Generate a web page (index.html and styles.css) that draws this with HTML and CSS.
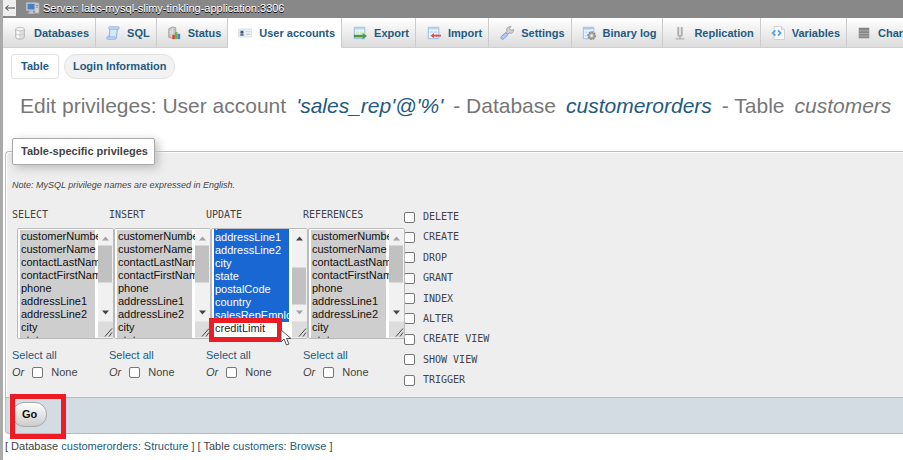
FILE: index.html
```html
<!DOCTYPE html>
<html lang="en">
<head>
<meta charset="utf-8">
<title>Edit privileges</title>
<link rel="stylesheet" href="styles.css">
</head>
<body>
<header class="server">
  <button class="collapse" type="button" aria-label="Collapse navigation"><svg width="12" height="8" viewBox="0 0 12 8"><path d="M11 4H2M4.500 1.500 1.500 4l3 2.500" fill="none" stroke="#444"/></svg></button>
  <svg class="icon" viewBox="0 0 16 16"><path d="M10 2h5v12h-5z" fill="#d5d5d5" stroke="#999"/><path d="M11.500 5h2M11.500 7h2" stroke="#777"/><path d="M1 2.500h9.500v8H1z" fill="#4a7fc4" stroke="#c5ccd6" stroke-width="1.500"/><path d="M4 11h4v2H4zM2.500 13h7v1.500h-7z" fill="#c4c4c4"/></svg>
  <a href="#">Server: labs-mysql-slimy-tinkling-application:3306</a>
</header>

<nav class="tabs">
  <a class="tab" href="#"><svg class="icon" viewBox="0 0 16 16"><path d="M3 3.500v9c0 3.500 10 3.500 10 0v-9" fill="#dedede" stroke="#b4b4b4"/><path d="M4 5h3v9L4 13z" fill="#f8f8f8"/><ellipse cx="8" cy="3.500" rx="5" ry="2" fill="#f4f4f4" stroke="#bbb"/><path d="M3 8c0 3 10 3 10 0" fill="none" stroke="#c6c6c6"/></svg>Databases</a>
  <a class="tab" href="#"><svg class="icon" viewBox="0 0 16 16"><path d="M4 1h10c1.500 0 1.500 2.500 0 2.500h-1L12 13c0 1.500-1 2-2 2H2c-1.500 0-1.500-2.500 0-2.500h1.500L4.500 4C3 4 2.500 1.500 4 1z" fill="#d7e8fb" stroke="#7ba5d7"/><path d="M4.500 3.500H13M3 12.500h7c.8 0 .8 2 0 2.500" fill="none" stroke="#7ba5d7"/></svg>SQL</a>
  <a class="tab" href="#"><svg class="icon" viewBox="0 0 16 16"><path d="M2 3l4-2 4 1v10l-4 2-4-1z" fill="#c7c7c7" stroke="#9b9b9b"/><path d="M6 3v10M3 6h2M3 8h2" stroke="#eee"/><path d="M6 10h3v5H6z" fill="#e93f31"/><path d="M9 7h3v8H9z" fill="#65b547"/><path d="M12 9h3v6h-3z" fill="#4b7de0"/></svg>Status</a>
  <a class="tab active" href="#" aria-current="page"><svg class="icon" viewBox="0 0 16 16"><path d="M.5 3.500h15v9H.5z" fill="#eef3f8" stroke="#d5dbe1"/><path d="M2 5h5v6H2z" fill="#9ccaf2"/><circle cx="4.500" cy="7" r="1.500" fill="#70492e"/><path d="M2.500 11c0-3 4-3 4 0z" fill="#3c76c5"/><path d="M9 6.500h2M12 6.500h2M9 9.500h5" stroke="#b5bfca"/></svg>User accounts</a>
  <a class="tab" href="#"><svg class="icon" viewBox="0 0 16 16"><path d="M1.500 1.500h12v13h-12z" fill="#eaf4ff" stroke="#91b5e6"/><path d="M2 2h11v2H2z" fill="#b6d7ef"/><path d="M3 6h4v3H3zM8 6h4v3H8z" fill="#d9efbb"/><path d="M1 10h10V8l5 3.500-5 3.500v-2H1z" fill="#4c9a46"/></svg>Export</a>
  <a class="tab" href="#"><svg class="icon" viewBox="0 0 16 16"><path d="M1.500 1.500h12v13h-12z" fill="#eaf4ff" stroke="#91b5e6"/><path d="M2 2h11v2H2z" fill="#b6d7ef"/><path d="M3 6h4v2H3zM8 6h4v2H8z" fill="#c8dcf5"/><path d="M4 11l4-3v2h2l1-1v1h5v2h-5v1l-1-1H8v2z" fill="#ee4547"/></svg>Import</a>
  <a class="tab" href="#"><svg class="icon" viewBox="0 0 16 16"><path d="M9 1.500 12.500.5 11 3l1.500 2 3-1c.5 3-2 5-5 4L8 9.500 6.500 8 8 6c-.8-2 0-4 1-4.500z" fill="#d2d2d2" stroke="#999"/><path d="M6.500 7.500 9 10l-4.500 4.500c-2 2-4.500-.5-3-2.500z" fill="#a9caff" stroke="#6d96da"/></svg>Settings</a>
  <a class="tab" href="#"><svg class="icon" viewBox="0 0 16 16"><path d="M1.500 1.500h12v13h-12z" fill="#eaf4ff" stroke="#91b5e6"/><path d="M2 2h11v2H2z" fill="#a8c8ee"/><path d="M3 6h3v2H3zM3 10h3v2H3zM8 6h4v2H8z" fill="#c4dbf5"/><circle cx="11" cy="11" r="4" fill="#aaa" stroke="#8a8a8a" stroke-width="2" stroke-dasharray="2 1"/><circle cx="11" cy="11" r="1.500" fill="#eee"/></svg>Binary log</a>
  <a class="tab" href="#"><svg class="icon" viewBox="0 0 16 16"><path d="M5 1h2v9H5zM9 1h2v9H9z" fill="#aaa"/><path d="M7 1h2v10H7z" fill="#e2e2e2"/><path d="M5 10h6v2H5zM7 12h2v2h4v1.500H3V14h4z" fill="#b1b1b1"/></svg>Replication</a>
  <a class="tab" href="#"><svg class="icon" viewBox="0 0 16 16"><path d="M3.500.5H12L15.500 4v11.500h-12z" fill="#fafafa" stroke="#ccc"/><path d="M12 .5V4h3.500" fill="#eee" stroke="#ccc"/><path d="M5 5 2 8l3 3M8 5l3 3-3 3" fill="none" stroke="#4f9fed" stroke-width="2"/></svg>Variables</a>
  <a class="tab" href="#"><svg class="icon" viewBox="0 0 16 16"><path d="M2 2h12v12H2z" fill="#858585"/><path d="M2 5.500h12M2 8.500h12M2 11.500h12" stroke="#b5b5b5"/></svg>Charsets</a>
</nav>

<main class="page">
  <nav class="subtabs">
    <a class="subtab current" href="#">Table</a>
    <a class="subtab" href="#">Login Information</a>
  </nav>

  <h2 class="title">
    <span>Edit privileges: User account</span>
    <a href="#">'sales_rep'@'%'</a>
    <span>- Database</span>
    <a href="#">customerorders</a>
    <span>- Table</span>
    <em>customers</em>
  </h2>

  <form>
    <section class="panel" aria-labelledby="legend">
      <h3 class="legend" id="legend">Table-specific privileges</h3>
      <p class="note">Note: MySQL privilege names are expressed in English.</p>
      <div class="privileges">
        <div class="column">
          <label class="name" for="sel">SELECT</label>
          <div class="list">
            <select id="sel" multiple size="8"><option selected>customerNumber<option selected>customerName<option selected>contactLastName<option selected>contactFirstName<option selected>phone<option selected>addressLine1<option selected>addressLine2<option selected>city<option selected>state<option selected>postalCode<option selected>country<option selected>salesRepEmployeeNumber<option selected>creditLimit</select>
            <svg class="bar" viewBox="0 0 15 108"><path d="M0 0h15v108H0z" fill="#f1f1f1"/><path d="M0 16h14v37H0z" fill="#c1c1c1"/><path d="M4 11l3.500-4L11 11z" fill="#a3a3a3"/><path d="M4 81l3.500 4L11 81z" fill="#444"/><path d="M0 92h15v16H0z" fill="#dcdcdc"/><path d="M7 107l7-8M11 107l3-4" stroke="#444"/></svg>
          </div>
          <a class="all" href="#">Select all</a>
          <div class="none"><i>Or</i><input type="checkbox" id="n1"><label for="n1">None</label></div>
        </div>
        <div class="column">
          <label class="name" for="ins">INSERT</label>
          <div class="list">
            <select id="ins" multiple size="8"><option selected>customerNumber<option selected>customerName<option selected>contactLastName<option selected>contactFirstName<option selected>phone<option selected>addressLine1<option selected>addressLine2<option selected>city<option selected>state<option selected>postalCode<option selected>country<option selected>salesRepEmployeeNumber<option selected>creditLimit</select>
            <svg class="bar" viewBox="0 0 15 108"><path d="M0 0h15v108H0z" fill="#f1f1f1"/><path d="M0 16h14v37H0z" fill="#c1c1c1"/><path d="M4 11l3.500-4L11 11z" fill="#a3a3a3"/><path d="M4 81l3.500 4L11 81z" fill="#444"/><path d="M0 92h15v16H0z" fill="#dcdcdc"/><path d="M7 107l7-8M11 107l3-4" stroke="#444"/></svg>
          </div>
          <a class="all" href="#">Select all</a>
          <div class="none"><i>Or</i><input type="checkbox" id="n2"><label for="n2">None</label></div>
        </div>
        <div class="column">
          <label class="name" for="upd">UPDATE</label>
          <div class="list editing">
            <select id="upd" multiple size="8"><option selected>customerNumber<option selected>customerName<option selected>contactLastName<option selected>contactFirstName<option selected>phone<option selected>addressLine1<option selected>addressLine2<option selected>city<option selected>state<option selected>postalCode<option selected>country<option selected>salesRepEmployeeNumber<option>creditLimit</select>
            <svg class="bar" viewBox="0 0 15 108"><path d="M0 0h15v108H0z" fill="#f1f1f1"/><path d="M0 38h14v37H0z" fill="#c1c1c1"/><path d="M4 11l3.500-4L11 11z" fill="#444"/><path d="M4 81l3.500 4L11 81z" fill="#a3a3a3"/><path d="M0 92h15v16H0z" fill="#dcdcdc"/><path d="M7 107l7-8M11 107l3-4" stroke="#444"/></svg>
            <span class="mark mark-option"></span>
            <svg class="pointer" width="12" height="18" viewBox="0 0 12 18"><path d="M1 1v12l3-3 2.500 6 2.500-1-2.500-5.500H11z" fill="#fff" stroke="#555"/></svg>
          </div>
          <a class="all" href="#">Select all</a>
          <div class="none"><i>Or</i><input type="checkbox" id="n3"><label for="n3">None</label></div>
        </div>
        <div class="column">
          <label class="name" for="ref">REFERENCES</label>
          <div class="list">
            <select id="ref" multiple size="8"><option selected>customerNumber<option selected>customerName<option selected>contactLastName<option selected>contactFirstName<option selected>phone<option selected>addressLine1<option selected>addressLine2<option selected>city<option selected>state<option selected>postalCode<option selected>country<option selected>salesRepEmployeeNumber<option selected>creditLimit</select>
            <svg class="bar" viewBox="0 0 15 108"><path d="M0 0h15v108H0z" fill="#f1f1f1"/><path d="M0 16h14v37H0z" fill="#c1c1c1"/><path d="M4 11l3.500-4L11 11z" fill="#a3a3a3"/><path d="M4 81l3.500 4L11 81z" fill="#444"/><path d="M0 92h15v16H0z" fill="#dcdcdc"/><path d="M7 107l7-8M11 107l3-4" stroke="#444"/></svg>
          </div>
          <a class="all" href="#">Select all</a>
          <div class="none"><i>Or</i><input type="checkbox" id="n4"><label for="n4">None</label></div>
        </div>
        <div class="checks">
          <label class="name"><input type="checkbox">DELETE</label>
          <label class="name"><input type="checkbox">CREATE</label>
          <label class="name"><input type="checkbox">DROP</label>
          <label class="name"><input type="checkbox">GRANT</label>
          <label class="name"><input type="checkbox">INDEX</label>
          <label class="name"><input type="checkbox">ALTER</label>
          <label class="name"><input type="checkbox">CREATE VIEW</label>
          <label class="name"><input type="checkbox">SHOW VIEW</label>
          <label class="name"><input type="checkbox">TRIGGER</label>
        </div>
      </div>
    </section>
    <div class="actions">
      <button class="go" type="submit">Go</button>
      <span class="mark mark-go"></span>
    </div>
  </form>
  <p class="links">[ Database <a href="#">customerorders: Structure</a> ] [ Table <a href="#">customers: Browse</a> ]</p>
</main>
<script src="script.js"></script>
</body>
</html>
```
FILE: styles.css
```css
* {
  box-sizing: border-box;
}

body {
  margin: 0;
  border-left: 3px solid #aaa;
  background: #fff;
  color: #444;
  font: 11px/14px "Liberation Sans", Arial, sans-serif;
  min-height: 100vh;
  overflow: hidden;
}

a {
  color: #235a81;
  text-decoration: none;
}

.icon {
  width: 14px;
  height: 14px;
  flex: none;
}

.server {
  display: flex;
  align-items: center;
  gap: 3px;
  height: 18px;
  padding-bottom: 2px;
  background: #888;
}

.server a {
  color: #fff;
  text-shadow: 0 1px 0 #000;
}

.server .icon {
  margin-left: 7px;
}

.collapse {
  display: flex;
  align-items: center;
  justify-content: center;
  width: 13px;
  height: 16px;
  padding: 0;
  border: 0;
  background: #eee;
}

.tabs {
  display: flex;
  height: 30px;
  padding-left: 2px;
}

.tab {
  display: flex;
  flex: none;
  align-items: center;
  gap: 7px;
  padding: 0 6px 0 10px;
  border-right: 1px solid #ccc;
  border-bottom: 1px solid #d0d0d0;
  background: linear-gradient(#fff, #dcdcdc);
  font-weight: bold;
}

.tab:first-child {
  margin-left: -2px;
}

.tab.active {
  border-bottom-color: #fff;
  background: #fff;
}

.tab.active ~ .tab {
  padding-left: 11px;
}

.tab.active ~ .tab:nth-child(n + 8) {
  padding-left: 10px;
}

.page {
  padding-left: 2px;
}

.subtabs {
  display: flex;
  gap: 5px;
  padding: 6px 6px 0;
}

.subtab {
  padding: 4px 8px;
  border: 1px solid #e2e2e2;
  border-radius: 12px;
  background: #f2f2f2;
  font-weight: bold;
  line-height: 15px;
}

.subtab.current {
  padding: 4px 9px;
  border-radius: 3px;
  background: #fff;
}

.title {
  display: flex;
  gap: 10px;
  margin: 14px 0 20px;
  padding-left: 15px;
  color: #777;
  font-size: 21px;
  font-weight: normal;
  line-height: 26px;
  white-space: nowrap;
}

.title a {
  font-style: italic;
}

.panel {
  margin-top: 32px;
  padding: 0 0 18px 6px;
  border: 1px solid #bbb;
  border-right: 0;
  border-bottom: 0;
  border-radius: 4px 0 0 0;
  background: #eee;
  box-shadow: inset 1px 1px 0 #fff;
}

.legend {
  width: max-content;
  margin: -14px 0 0;
  padding: 5px 6px 5px 8px;
  border: 1px solid #aaa;
  border-radius: 2px;
  background: #fff;
  box-shadow: 3px 3px 10px #bbb;
  font-size: 11px;
  line-height: 15px;
}

.note {
  margin: 14px 0 18px;
  font-size: 9px;
  font-style: italic;
  line-height: 12px;
}

.name {
  font: 10px/12px "DejaVu Sans Mono", monospace;
}

.privileges {
  display: flex;
}

.column {
  display: flex;
  flex-direction: column;
  align-items: flex-start;
  width: 97px;
}

.list {
  position: relative;
  display: flex;
  width: 97px;
  height: 111px;
  margin: 7px 0 9px 5px;
  border: 1px solid #bbb;
  border-radius: 2px;
  background: #fff;
}

.list select {
  flex: 1;
  min-width: 0;
  height: 109px;
  padding: 1px 3px 0 2px;
  border: 0;
  outline: 0;
  background: transparent;
  color: #222;
  font: 11px/13px "Liberation Sans", Arial, sans-serif;
}

.list option {
  min-height: 13px;
  padding: 0 1px;
  line-height: 13px;
}

.list.editing select {
  padding-bottom: 3px;
}

.editing option:checked {
  background: linear-gradient(#1967d2, #1967d2);
  -webkit-text-fill-color: #fff;
}

.bar {
  flex: none;
  width: 15px;
  height: 109px;
}

input[type="checkbox"] {
  appearance: none;
  flex: none;
  width: 11px;
  height: 11px;
  margin: 0;
  border: 1px solid #767676;
  border-radius: 2px;
  background: #fff;
}

.none {
  display: flex;
  align-items: center;
  gap: 8px;
  margin-top: 3px;
}

.checks {
  display: flex;
  flex-direction: column;
  justify-content: space-between;
  margin: 2px 0 -7px 4px;
}

.checks .name {
  display: flex;
  align-items: center;
  gap: 8px;
}

.actions {
  position: relative;
  padding: 4px 6px 6px;
  border: 1px solid #bbb;
  border-right: 0;
  border-radius: 0 0 0 4px;
  background: #d3dce3;
}

.go {
  display: block;
  padding: 4px 9px;
  border: 1px solid #aaa;
  border-radius: 12px;
  background: linear-gradient(#fff, #ccc);
  color: #111;
  font: bold 11px/15px "Liberation Sans", Arial, sans-serif;
}

.mark {
  position: absolute;
  border: 5px solid #ed1c24;
  pointer-events: none;
}

.mark-option {
  left: -3px;
  top: 89px;
  width: 73px;
  height: 24px;
}

.mark-go {
  left: 4px;
  top: -4px;
  width: 56px;
  height: 45px;
}

.pointer {
  position: absolute;
  left: 68px;
  top: 100px;
}

.links {
  margin: 5px 0 0;
}
```
FILE: script.js
```js
// Keep the last column of the table in view in the UPDATE list.
const list = document.getElementById("upd");
const showEnd = () => { list.scrollTop = list.scrollHeight; };
showEnd();
window.addEventListener("load", () => {
  showEnd();
  requestAnimationFrame(showEnd);
});
```
